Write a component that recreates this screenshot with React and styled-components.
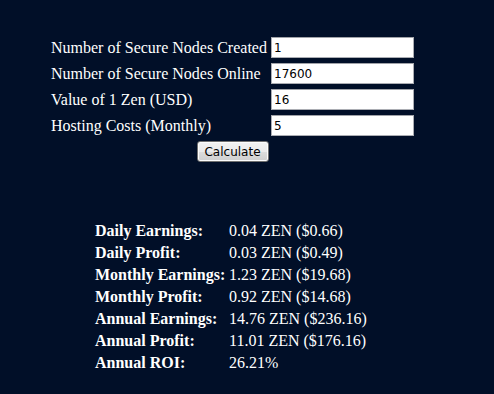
import React from "react";
import styled, { createGlobalStyle } from "styled-components";

const Global = createGlobalStyle`
  html, body { margin: 0; padding: 0; background: #010f28; }
  body { font-family: "Liberation Serif", "Times New Roman", serif; color: #ffffff; }
`;

const Page = styled.div`
  min-height: 394px;
  background: #010f28;
  padding: 37px 0 0 51px;
  box-sizing: border-box;
`;

const Form = styled.div`
  display: grid;
  grid-template-columns: 218px 143px;
  column-gap: 2px;
  row-gap: 5px;
  width: 363px;
`;

const Label = styled.label`
  font-size: 16px;
  line-height: 21px;
  height: 21px;
  white-space: nowrap;
  display: flex;
  align-items: center;
`;

const Input = styled.input`
  box-sizing: border-box;
  width: 143px;
  height: 21px;
  margin: 0;
  padding: 1px 2px;
  border: 1px solid #abadb3;
  border-top-color: #a0a2a8;
  background: #fff;
  color: #000;
  font-family: "DejaVu Sans", Tahoma, sans-serif;
  font-size: 12px;
  outline: none;
`;

const ButtonRow = styled.div`
  grid-column: 1 / span 2;
  display: flex;
  justify-content: center;
`;

const Button = styled.button`
  box-sizing: border-box;
  width: 72px;
  height: 21px;
  margin: 0;
  padding: 0;
  border: 1px solid #707070;
  border-radius: 3px;
  background: linear-gradient(#f2f2f2 0%, #ebebeb 50%, #dddddd 51%, #cfcfcf 100%);
  box-shadow: inset 0 0 0 1px #fcfcfc;
  color: #000;
  font-family: "DejaVu Sans", Tahoma, sans-serif;
  font-size: 12px;
  cursor: pointer;
`;

const Results = styled.div`
  display: grid;
  grid-template-columns: 134px auto;
  grid-auto-rows: 22px;
  margin: 58px 0 0 44px;
  font-size: 16px;
  line-height: 22px;
`;

const RLabel = styled.div`
  font-weight: bold;
  white-space: nowrap;
`;

const RValue = styled.div`
  white-space: nowrap;
`;

const fields = [
  ["Number of Secure Nodes Created", "1"],
  ["Number of Secure Nodes Online", "17600"],
  ["Value of 1 Zen (USD)", "16"],
  ["Hosting Costs (Monthly)", "5"],
];

const results = [
  ["Daily Earnings:", "0.04 ZEN ($0.66)"],
  ["Daily Profit:", "0.03 ZEN ($0.49)"],
  ["Monthly Earnings:", "1.23 ZEN ($19.68)"],
  ["Monthly Profit:", "0.92 ZEN ($14.68)"],
  ["Annual Earnings:", "14.76 ZEN ($236.16)"],
  ["Annual Profit:", "11.01 ZEN ($176.16)"],
  ["Annual ROI:", "26.21%"],
];

export default function App() {
  return (
    <>
      <Global />
      <Page>
        <Form>
          {fields.map(([l, v]) => (
            <React.Fragment key={l}>
              <Label>{l}</Label>
              <Input defaultValue={v} />
            </React.Fragment>
          ))}
          <ButtonRow>
            <Button>Calculate</Button>
          </ButtonRow>
        </Form>
        <Results>
          {results.map(([l, v]) => (
            <React.Fragment key={l}>
              <RLabel>{l}</RLabel>
              <RValue>{v}</RValue>
            </React.Fragment>
          ))}
        </Results>
      </Page>
    </>
  );
}
